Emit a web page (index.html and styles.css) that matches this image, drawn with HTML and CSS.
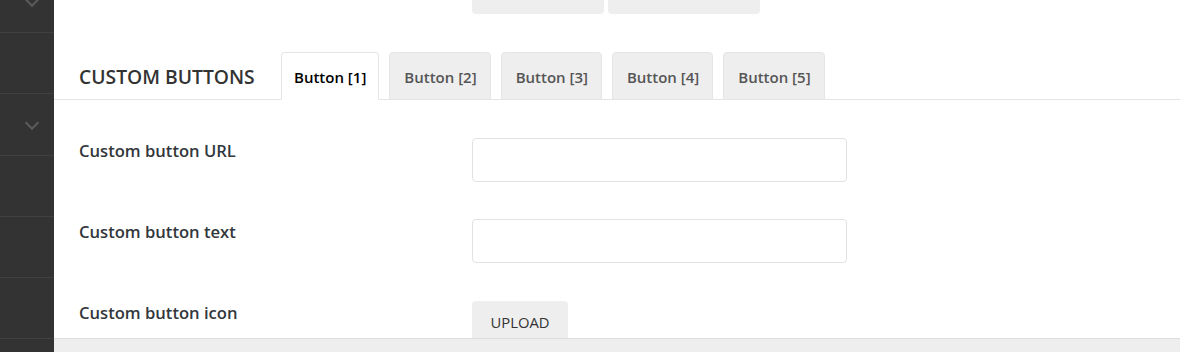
FILE: index.html
```html
<!DOCTYPE html>
<html lang="en">
<head>
  <meta charset="UTF-8">
  <meta name="viewport" content="width=device-width, initial-scale=1.0">
  <title>Custom Buttons</title>
  <link rel="stylesheet" href="styles.css">
</head>
<body>

  <!-- Left admin menu -->
  <aside class="sidebar">
    <div class="side-item"><span class="chevron"></span></div>
    <div class="side-item"></div>
    <div class="side-item tall"><span class="chevron"></span></div>
    <div class="side-item"></div>
    <div class="side-item"></div>
    <div class="side-item"></div>
  </aside>

  <main class="main">
    <!-- Buttons from the section above (scrolled) -->
    <div class="row top-actions">
      <div class="label"></div>
      <div class="field">
        <button class="btn-gray top-btn short"></button>
        <button class="btn-gray top-btn long"></button>
      </div>
    </div>

    <!-- Section header with tabs -->
    <div class="section-head">
      <h2 class="section-title">CUSTOM BUTTONS</h2>
      <div class="tabs">
        <button class="tab active">Button [1]</button>
        <button class="tab">Button [2]</button>
        <button class="tab">Button [3]</button>
        <button class="tab">Button [4]</button>
        <button class="tab">Button [5]</button>
      </div>
    </div>

    <div class="form">
      <div class="row">
        <div class="label">Custom button URL</div>
        <div class="field"><input class="text-input" type="text"></div>
      </div>
      <div class="row">
        <div class="label">Custom button text</div>
        <div class="field"><input class="text-input" type="text"></div>
      </div>
      <div class="row">
        <div class="label">Custom button icon</div>
        <div class="field"><button class="btn-gray upload">UPLOAD</button></div>
      </div>
    </div>

    <div class="footer-bar"></div>
  </main>

</body>
</html>
```

FILE: styles.css
```css
html, body {
  height: 100%;
}

body {
  margin: 0;
  display: flex;
  overflow: hidden;
  font-family: 'Open Sans', 'Noto Sans', sans-serif;
  color: #333;
  background: #fff;
}

/* sidebar */
.sidebar {
  width: 54px;
  flex-shrink: 0;
  background: #333;
  margin-top: -28px;
}

.side-item {
  height: 60px;
  border-bottom: 1px solid #404040;
  display: flex;
  align-items: center;
  justify-content: flex-end;
  padding-right: 17px;
}

.side-item.tall {
  height: 61px;
}

.chevron {
  width: 8px;
  height: 8px;
  border-right: 2px solid #5c5c5c;
  border-bottom: 2px solid #5c5c5c;
  transform: rotate(45deg);
  margin-top: -4px;
}

/* main area */
.main {
  flex: 1;
  display: flex;
  flex-direction: column;
  position: relative;
}

.row {
  display: flex;
  padding-left: 25px;
}

.label {
  width: 393px;
  flex-shrink: 0;
  font-size: 16.6px;
  font-weight: 600;
  color: #32373c;
  padding-top: 1px;
}

.field {
  display: flex;
  gap: 4px;
}

.btn-gray {
  background: #eee;
  border: none;
  border-radius: 4px;
  font-family: inherit;
  color: #333;
  padding: 0;
}

.top-actions {
  margin-top: -20px;
}

.top-btn {
  height: 34px;
}

.top-btn.short {
  width: 132px;
}

.top-btn.long {
  width: 152px;
}

/* header + tabs */
.section-head {
  display: flex;
  align-items: flex-end;
  margin-top: 38px;
  padding-left: 25px;
  border-bottom: 1px solid #e5e5e5;
}

.section-title {
  width: 202px;
  margin: 0;
  font-size: 19.3px;
  font-weight: 600;
  color: #333;
  align-self: center;
  padding-top: 2px;
}

.tabs {
  display: flex;
  gap: 10px;
}

.tab {
  height: 48px;
  padding: 1px 13px 0 14px;
  margin-bottom: -1px;
  background: #eee;
  border: 1px solid #e5e5e5;
  border-radius: 4px 4px 0 0;
  font-family: inherit;
  font-size: 15px;
  font-weight: 600;
  color: #555;
}

.tab.active {
  padding: 1px 12px 0;
  background: #fff;
  border-bottom-color: #fff;
  color: #000;
}

/* form rows */
.form {
  display: flex;
  flex-direction: column;
  gap: 37px;
  padding-top: 38px;
}

.row + .row .upload {
  margin-top: 1px;
}

.text-input {
  width: 375px;
  height: 44px;
  box-sizing: border-box;
  border: 1px solid #e2e2e2;
  border-radius: 4px;
}

.upload {
  width: 96px;
  height: 44px;
  padding-bottom: 2px;
  font-size: 14.8px;
}

.footer-bar {
  position: absolute;
  left: 0;
  right: 0;
  top: 338px;
  height: 14px;
  background: #eee;
  border-top: 1px solid #ddd;
}
```
